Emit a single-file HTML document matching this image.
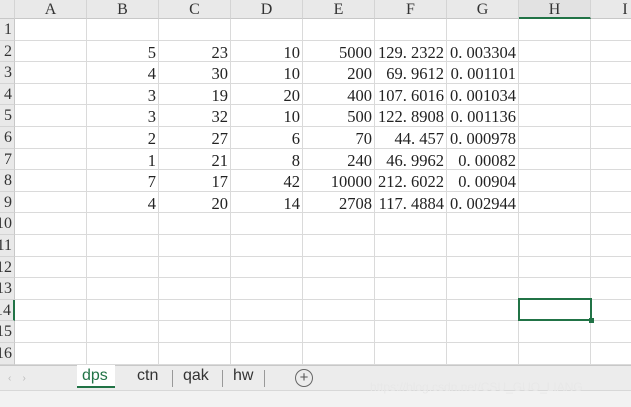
<!DOCTYPE html><html><head><style>
body{margin:0;width:631px;height:406px;overflow:hidden;background:#fff;font-family:"Liberation Serif","Noto Serif CJK SC",serif;position:relative}
.h{position:absolute;top:0;height:19px;background:#e9e9e9;border-bottom:1px solid #c8c8c8;border-right:1px solid #d4d4d4;box-sizing:border-box;text-align:center;font-size:16px;line-height:19px;color:#333}
.r{position:absolute;left:0;width:15px;background:#e9e9e9;border-right:1px solid #c8c8c8;border-bottom:1px solid #d4d4d4;box-sizing:border-box;font-size:16px;color:#333;overflow:hidden}
.r span{position:absolute;right:2px}
.vl{position:absolute;top:19px;height:346px;width:1px;background:#dadada}
.hl{position:absolute;left:15px;width:616px;height:1px;background:#dadada}
.c{position:absolute;font-size:16.5px;color:#222;text-align:right;width:90px;white-space:nowrap}
</style></head><body>
<div id="g"></div>
<div style="position:absolute;left:0;top:365px;width:631px;height:25px;background:#ececec;border-top:1px solid #c8c8c8"></div>
<div style="position:absolute;left:0;top:390px;width:631px;height:16px;background:#f2f2f2;border-top:1px solid #d8d8d8"></div>
<div style="position:absolute;left:8px;top:373px;color:#bbb;font-size:10px;font-family:'Liberation Sans'">‹&nbsp;&nbsp;&nbsp;&nbsp;›</div>
<div style="position:absolute;left:77px;top:365px;width:28px;height:21px;background:#fff;border-bottom:2px solid #217346;padding:0 5px;font:16px 'Liberation Sans',sans-serif;line-height:21px;color:#217346">dps</div>
<div style="position:absolute;left:137px;top:365px;font:16px 'Liberation Sans',sans-serif;line-height:21px;color:#333">ctn</div>
<div style="position:absolute;top:370px;left:172px;width:1px;height:17px;background:#999"></div>
<div style="position:absolute;left:183px;top:365px;font:16px 'Liberation Sans',sans-serif;line-height:21px;color:#333">qak</div>
<div style="position:absolute;left:222px;top:370px;width:1px;height:17px;background:#999"></div>
<div style="position:absolute;left:233px;top:365px;font:16px 'Liberation Sans',sans-serif;line-height:21px;color:#333">hw</div>
<div style="position:absolute;left:264px;top:370px;width:1px;height:17px;background:#999"></div>
<div style="position:absolute;left:295px;top:369px;width:16px;height:16px;border:1px solid #666;border-radius:50%;text-align:center;font:15px/16px 'Liberation Sans',sans-serif;color:#555">+</div>
<div style="position:absolute;left:370px;top:380px;font:12px 'Liberation Sans',sans-serif;color:#e8e8e8">https://blog.csdn.net/CSU_GUO_LIANG</div>
<div style="position:absolute;left:518px;top:298px;width:74px;height:23px;border:2px solid #217346;box-sizing:border-box"></div>
<div style="position:absolute;left:589px;top:318px;width:5px;height:5px;background:#217346"></div>
<script>
var g='',cols=[15,87,159,231,303,375,447,519,591,660],L='ABCDEFGHI';
for(var i=0;i<9;i++)g+='<div class="h" style="left:'+cols[i]+'px;width:'+(cols[i+1]-cols[i])+'px;'+(i==7?'border-bottom:2px solid #217346;background:#e2e2e2;':'')+'">'+L[i]+'</div>';
g+='<div class="h" style="left:0;width:15px"></div>';
var RH=21.6,T=19;
for(var r=0;r<16;r++){var y=T+r*RH;g+='<div class="r" style="top:'+y+'px;height:'+RH+'px;line-height:'+RH+'px;'+(r==13?'border-right:2px solid #217346;':'')+'"><span>'+(r+1)+'</span></div>';g+='<div class="hl" style="top:'+(y+RH-1)+'px"></div>';}
for(var i=1;i<9;i++)g+='<div class="vl" style="left:'+(cols[i]-1)+'px"></div>';
var d=[[5,23,10,5000,'129. 2322','0. 003304'],[4,30,10,200,'69. 9612','0. 001101'],[3,19,20,400,'107. 6016','0. 001034'],[3,32,10,500,'122. 8908','0. 001136'],[2,27,6,70,'44. 457','0. 000978'],[1,21,8,240,'46. 9962','0. 00082'],[7,17,42,10000,'212. 6022','0. 00904'],[4,20,14,2708,'117. 4884','0. 002944']];
for(var r=0;r<8;r++){var y=T+(r+1)*RH+1;for(var c=0;c<6;c++)g+='<div class="c" style="top:'+y+'px;line-height:'+RH+'px;left:'+(cols[c+2]-93)+'px">'+d[r][c]+'</div>';}
document.getElementById('g').innerHTML=g;
</script>
</body></html>
